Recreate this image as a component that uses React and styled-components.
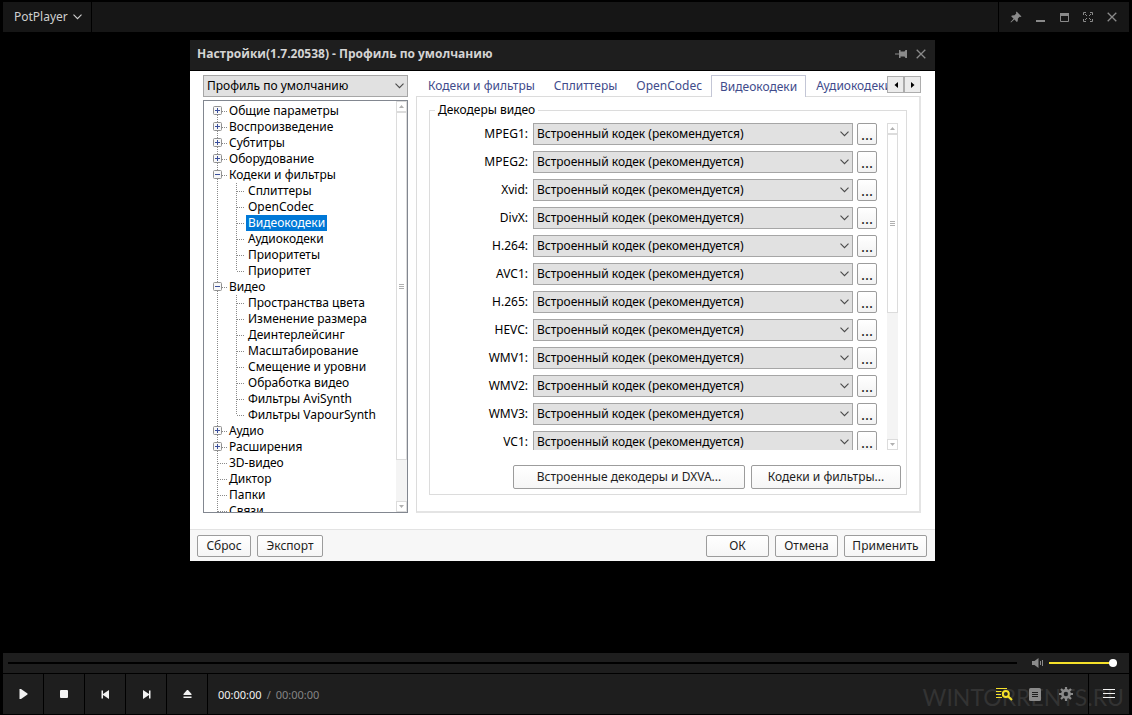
import React from "react";
import styled, { createGlobalStyle } from "styled-components";

const GlobalStyle = createGlobalStyle`
    * { box-sizing: border-box; }
    body {
        margin: 0;
        background: #000;
        font-family: "Noto Sans", "Open Sans", sans-serif;
        font-size: 12px;
        line-height: 16px;
    }
    button, select, input {
        font: inherit;
        margin: 0;
        padding: 0;
    }
    button { cursor: pointer; }
    svg { display: block; flex: none; }
`;

const Player = styled.div`
    min-height: 100vh;
    display: flex;
    flex-direction: column;
    padding: 2px 3px 1px;
`;

/* ---- player title bar ---- */
const TitleBar = styled.header`
    display: flex;
    justify-content: space-between;
    height: 30px;
    background: #161616;
`;
const AppMenu = styled.button`
    display: flex;
    align-items: center;
    gap: 5px;
    padding: 0 9px 0 11px;
    border: 0;
    border-right: 1px solid #000;
    background: none;
    color: #cfcfcf;
`;
const WindowButtons = styled.div`
    display: flex;
    align-items: center;
    padding: 0 5px;
    border-left: 1px solid #000;
`;
const IconButton = styled.button`
    display: flex;
    align-items: center;
    justify-content: center;
    width: ${props => (props.$narrow ? "20px" : "24px")};
    height: 24px;
    border: 0;
    background: none;
    color: ${props => props.color || "#8a8a8a"};
`;

/* ---- settings dialog ---- */
const Stage = styled.main`
    flex: 1;
    padding: 8px 194px 8px 187px;
`;
const Dialog = styled.section`
    display: flex;
    flex-direction: column;
    background: #fff;
    color: #000;
`;
const DialogHeader = styled.div`
    display: flex;
    align-items: center;
    height: 31px;
    padding: 0 4px 3px 7px;
    background: #1e1e1e;
    border-bottom: 1px solid #000;
    color: #d4d4d4;
`;
const DialogTitle = styled.h1`
    flex: 1;
    margin: 0;
    font-family: "Open Sans", "Noto Sans", sans-serif;
    font-size: 12px;
    font-weight: 700;
`;
const DialogBody = styled.div`
    display: grid;
    grid-template-columns: 205px minmax(0, 1fr);
    gap: 8px;
    padding: 4px 14px 16px 13px;
`;
const SideColumn = styled.div`
    display: flex;
    flex-direction: column;
    gap: 3px;
`;
const SelectWrap = styled.div`
    position: relative;
    flex: ${props => (props.$grow ? "1" : "none")};
    color: #4a4a4a;
    svg {
        position: absolute;
        right: 4px;
        top: 8px;
        pointer-events: none;
    }
`;
const Select = styled.select`
    display: block;
    width: 100%;
    height: 22px;
    padding: 0 20px 0 3px;
    border: 1px solid #a6a6a6;
    border-radius: 0;
    background: #e1e1e1;
    color: #000;
    appearance: none;
`;
const TreeBox = styled.div`
    display: flex;
    flex: 1 0 0;
    height: 0;
    border: 1px solid #828790;
    overflow: hidden;
    background: #fff;
`;
const TreeList = styled.ul`
    flex: 1;
    margin: 0;
    padding: 2px 0 0 9px;
    list-style: none;
    overflow: hidden;
`;
const TreeRow = styled.li`
    display: flex;
    align-items: center;
    height: 16px;
`;
const TreeLabel = styled.button`
    height: 16px;
    padding: 0 2px;
    border: 0;
    line-height: 16px;
    white-space: nowrap;
    background: ${props => (props.$active ? "#0078d7" : "none")};
    color: ${props => (props.$active ? "#fff" : "#000")};
`;

const ScrollBar = styled.div`
    display: flex;
    flex-direction: column;
    width: 11px;
    background: #f4f4f4;
`;
const ScrollArrow = styled.button`
    display: flex;
    align-items: center;
    justify-content: center;
    height: 11px;
    border: 1px solid #dcdcdc;
    background: #fff;
`;
const ScrollThumb = styled.div`
    display: flex;
    align-items: center;
    justify-content: center;
    flex: ${props => props.$size};
    border: 1px solid #dcdcdc;
    background: #fff;
`;
const ScrollRest = styled.div`
    flex: ${props => props.$size};
`;

/* ---- tabs and decoder list ---- */
const Page = styled.div`
    display: flex;
    flex-direction: column;
`;
const TabStrip = styled.div`
    display: flex;
    height: 21px;
`;
const Tabs = styled.div`
    display: flex;
    flex: 1;
    height: 22px;
    padding-left: 2px;
    overflow: hidden;
    z-index: 1;
`;
const Tab = styled.button`
    flex: none;
    height: ${props => (props.$active ? "22px" : "20px")};
    padding: 0 ${props => (props.$active ? "8px" : "8px 0 9px")};
    border: 1px solid ${props => (props.$active ? "#c3c6d6" : "transparent")};
    border-bottom: 0;
    background: ${props => (props.$active ? "#fff" : "none")};
    color: #414b8b;
    white-space: nowrap;
`;
const TabArrow = styled.button`
    display: flex;
    align-items: center;
    justify-content: center;
    width: 17px;
    height: 17px;
    margin-top: 1px;
    border: 1px solid #adadad;
    background: #ececec;
`;
const TabPanel = styled.div`
    padding: 5px 12px 16px;
    border: 1px solid #dcdcdc;
    border-right: 2px solid #e4e4e4;
    border-bottom: 2px solid #e4e4e4;
`;
const Group = styled.fieldset`
    min-width: 0;
    margin: 0;
    padding: 5px;
    border: 1px solid #dcdcdc;
`;
const Legend = styled.legend`
    padding: 0 3px;
`;
const ListArea = styled.div`
    display: flex;
    height: 327px;
    padding-right: 3px;
    overflow: hidden;
`;
const CodecList = styled.div`
    display: flex;
    flex: 1;
    flex-direction: column;
    gap: 6px;
    padding-right: 10px;
`;
const CodecRow = styled.div`
    display: flex;
    gap: 4px;
`;
const CodecLabel = styled.label`
    width: 94px;
    padding-right: 1px;
    line-height: 22px;
    text-align: right;
`;
const MoreButton = styled.button`
    width: 20px;
    height: 22px;
    border: 1px solid #9c9c9c;
    border-radius: 2px;
    background: linear-gradient(#fff, #f2f2f2);
    color: #1e1e1e;
    font-size: 15px;
    line-height: 20px;
`;
const GroupButtons = styled.div`
    display: flex;
    justify-content: flex-end;
    gap: 6px;
    margin-top: 15px;
`;
const PushButton = styled.button`
    width: ${props => props.$width}px;
    height: ${props => (props.$tall ? "24px" : "22px")};
    border: 1px solid #9c9c9c;
    border-radius: 2px;
    background: linear-gradient(#fff, #f6f6f6);
    color: #1e1e1e;
    white-space: nowrap;
`;
const DialogFooter = styled.div`
    display: flex;
    gap: 6px;
    padding: 5px 8px 4px 7px;
    border-top: 1px solid #e3e3e3;
    background: #f7f7f7;
`;
const Spacer = styled.div`
    flex: 1;
`;

/* ---- playback bar ---- */
const Playback = styled.footer`
    background: #1e1e1e;
`;
const SeekRow = styled.div`
    display: flex;
    align-items: center;
    height: 21px;
    padding: 0 12px 0 5px;
    border-bottom: 1px solid #000;
    color: #8a8a8a;
`;
const SeekSlider = styled.input`
    flex: 1;
    height: 2px;
    margin-right: 15px;
    appearance: none;
    background: #000;
    &::-webkit-slider-thumb {
        appearance: none;
        width: 0;
        height: 0;
    }
`;
const VolumeSlider = styled.input`
    width: 68px;
    height: 2px;
    margin-left: 5px;
    appearance: none;
    background: #f5e12a;
    &::-webkit-slider-thumb {
        appearance: none;
        width: 8px;
        height: 8px;
        border-radius: 50%;
        background: #fff;
    }
`;
const ControlRow = styled.div`
    position: relative;
    display: flex;
    align-items: stretch;
    height: 40px;
`;
const ControlButton = styled.button`
    display: flex;
    align-items: center;
    justify-content: center;
    width: 41px;
    border: 0;
    border-right: 1px solid #000;
    background: none;
    color: #f2f2f2;
    z-index: 1;
`;
const MenuButton = styled(ControlButton)`
    border-right: 0;
    border-left: 1px solid #000;
`;
const Clock = styled.div`
    display: flex;
    flex: 1;
    align-items: center;
    gap: 5px;
    padding: 2px 0 0 10px;
    font-size: 11px;
    color: #858585;
    time:first-child { color: #f2f2f2; }
`;
const Tools = styled.div`
    display: flex;
    align-items: center;
    gap: 7px;
    padding-right: 10px;
    z-index: 1;
`;
const Watermark = styled.div`
    position: absolute;
    right: 5px;
    bottom: 0;
    font-family: Lato, "Noto Sans", sans-serif;
    font-size: 23px;
    line-height: 34px;
    color: #333;
    pointer-events: none;
`;

const tree = [
    { label: "Общие параметры", box: "plus" },
    { label: "Воспроизведение", box: "plus" },
    { label: "Субтитры", box: "plus" },
    { label: "Оборудование", box: "plus" },
    { label: "Кодеки и фильтры", box: "minus" },
    { label: "Сплиттеры", child: true },
    { label: "OpenCodec", child: true },
    { label: "Видеокодеки", child: true },
    { label: "Аудиокодеки", child: true },
    { label: "Приоритеты", child: true },
    { label: "Приоритет", child: true, last: true },
    { label: "Видео", box: "minus" },
    { label: "Пространства цвета", child: true },
    { label: "Изменение размера", child: true },
    { label: "Деинтерлейсинг", child: true },
    { label: "Масштабирование", child: true },
    { label: "Смещение и уровни", child: true },
    { label: "Обработка видео", child: true },
    { label: "Фильтры AviSynth", child: true },
    { label: "Фильтры VapourSynth", child: true, last: true },
    { label: "Аудио", box: "plus" },
    { label: "Расширения", box: "plus" },
    { label: "3D-видео" },
    { label: "Диктор" },
    { label: "Папки" },
    { label: "Связи" },
];
const tabs = ["Кодеки и фильтры", "Сплиттеры", "OpenCodec", "Видеокодеки", "Аудиокодеки"];
const codecs = ["MPEG1", "MPEG2", "Xvid", "DivX", "H.264", "AVC1", "H.265", "HEVC", "WMV1", "WMV2", "WMV3", "VC1"];

const Chevron = () => (
    <svg width="9" height="6" viewBox="0 0 9 6" fill="none" stroke="currentColor" strokeWidth="1.1">
        <path d="M0.5 0.7 4.5 4.7 8.5 0.7" />
    </svg>
);

// dotted connector lines and the expand box in front of a tree label
function Branch({ item, first }) {
    const width = item.child ? 33 : 14;
    return (
        <svg width={width} height="16" fill="none" stroke="#8a8a8a" strokeDasharray="1 1">
            <path d={first ? "M4.5 8V16" : "M4.5 0V16"} />
            {item.child && <path d={item.last ? "M23.5 0V8" : "M23.5 0V16"} />}
            <path d={item.child ? "M24 8.5H32" : "M5 8.5H14"} />
            {item.box && (
                <g strokeDasharray="none">
                    <rect x="0.5" y="3.5" width="8" height="8" rx="1" fill="#f8f8f8" stroke="#919191" />
                    <path d="M2 7.5H7" stroke="#3a4f9c" />
                    {item.box === "plus" && <path d="M4.5 5V10" stroke="#3a4f9c" />}
                </g>
            )}
        </svg>
    );
}

function Scroll({ thumb, rest }) {
    return (
        <ScrollBar>
            <ScrollArrow aria-label="Вверх">
                <svg width="5" height="3"><path d="M0 3 2.5 0 5 3Z" fill="#b0b0b0" /></svg>
            </ScrollArrow>
            <ScrollThumb $size={thumb}>
                <svg width="5" height="5" stroke="#b0b0b0"><path d="M0 0.5H5M0 2.5H5M0 4.5H5" /></svg>
            </ScrollThumb>
            <ScrollRest $size={rest} />
            <ScrollArrow aria-label="Вниз">
                <svg width="5" height="3"><path d="M0 0 2.5 3 5 0Z" fill="#b0b0b0" /></svg>
            </ScrollArrow>
        </ScrollBar>
    );
}

const CloseIcon = () => (
    <svg width="10" height="10" stroke="currentColor" strokeWidth="1.3">
        <path d="M0.7 0.7 9.3 9.3M9.3 0.7 0.7 9.3" />
    </svg>
);

function App() {
    const [page, setPage] = React.useState("Видеокодеки");

    return (
        <Player>
            <GlobalStyle />
            <TitleBar>
                <AppMenu>PotPlayer <Chevron /></AppMenu>
                <WindowButtons>
                    <IconButton aria-label="Поверх всех окон">
                        <svg width="12" height="12" viewBox="0 0 12 12" fill="currentColor">
                            <path d="M6.6 0.5 11.5 5.4 10.4 6 9.6 5.8 7.9 7.6 7.7 10.2 6.8 10.9 4.4 8.5 1 11.6 0.5 11 3.6 7.7 1.2 5.3 1.9 4.4 4.5 4.2 6.3 2.5 6 1.6Z" />
                        </svg>
                    </IconButton>
                    <IconButton aria-label="Свернуть">
                        <svg width="9" height="10" fill="currentColor"><path d="M0 8H9V10H0Z" /></svg>
                    </IconButton>
                    <IconButton aria-label="Развернуть">
                        <svg width="9" height="9" fill="none" stroke="currentColor">
                            <path d="M0.5 0.5H8.5V8.5H0.5Z" /><path d="M0 1.5H9" strokeWidth="3" />
                        </svg>
                    </IconButton>
                    <IconButton aria-label="Во весь экран">
                        <svg width="10" height="10" fill="none" stroke="currentColor">
                            <path d="M0.5 3V0.5H3M7 0.5H9.5V3M9.5 7V9.5H7M3 9.5H0.5V7M2 2 4 4M8 2 6 4M8 8 6 6M2 8 4 6" />
                        </svg>
                    </IconButton>
                    <IconButton aria-label="Закрыть"><CloseIcon /></IconButton>
                </WindowButtons>
            </TitleBar>

            <Stage>
                <Dialog aria-label="Настройки">
                    <DialogHeader>
                        <DialogTitle>Настройки(1.7.20538) - Профиль по умолчанию</DialogTitle>
                        <IconButton $narrow aria-label="Закрепить">
                            <svg width="12" height="8" fill="currentColor">
                                <path d="M0 3.5H4V0H5.5V1.5H9.5L10.5 0H12V8H10.5L9.5 6.5H5.5V8H4V4.5H0Z" />
                            </svg>
                        </IconButton>
                        <IconButton $narrow aria-label="Закрыть настройки"><CloseIcon /></IconButton>
                    </DialogHeader>

                    <DialogBody>
                        <SideColumn>
                            <SelectWrap>
                                <Select aria-label="Профиль"><option>Профиль по умолчанию</option></Select>
                                <Chevron />
                            </SelectWrap>
                            <TreeBox>
                                <TreeList>
                                    {tree.map((item, i) => (
                                        <TreeRow key={item.label}>
                                            <Branch item={item} first={i === 0} />
                                            <TreeLabel $active={item.label === page} onClick={() => setPage(item.label)}>
                                                {item.label}
                                            </TreeLabel>
                                        </TreeRow>
                                    ))}
                                </TreeList>
                                <Scroll thumb={347} rest={41} />
                            </TreeBox>
                        </SideColumn>

                        <Page>
                            <TabStrip>
                                <Tabs role="tablist">
                                    {tabs.map(tab => (
                                        <Tab
                                            key={tab}
                                            role="tab"
                                            aria-selected={tab === page}
                                            $active={tab === page}
                                            onClick={() => setPage(tab)}
                                        >
                                            {tab}
                                        </Tab>
                                    ))}
                                </Tabs>
                                <TabArrow aria-label="Назад">
                                    <svg width="4" height="6"><path d="M4 0V6L0.5 3Z" /></svg>
                                </TabArrow>
                                <TabArrow aria-label="Вперёд">
                                    <svg width="4" height="6"><path d="M0 0V6L3.5 3Z" /></svg>
                                </TabArrow>
                            </TabStrip>
                            <TabPanel>
                                <Group>
                                    <Legend>Декодеры видео</Legend>
                                    <ListArea>
                                        <CodecList>
                                            {codecs.map(codec => (
                                                <CodecRow key={codec}>
                                                    <CodecLabel htmlFor={codec}>{codec}:</CodecLabel>
                                                    <SelectWrap $grow>
                                                        <Select id={codec}>
                                                            <option>Встроенный кодек (рекомендуется)</option>
                                                        </Select>
                                                        <Chevron />
                                                    </SelectWrap>
                                                    <MoreButton aria-label={"Настроить " + codec}>...</MoreButton>
                                                </CodecRow>
                                            ))}
                                        </CodecList>
                                        <Scroll thumb={178} rest={127} />
                                    </ListArea>
                                    <GroupButtons>
                                        <PushButton $width={232} $tall>Встроенные декодеры и DXVA...</PushButton>
                                        <PushButton $width={150} $tall>Кодеки и фильтры...</PushButton>
                                    </GroupButtons>
                                </Group>
                            </TabPanel>
                        </Page>
                    </DialogBody>

                    <DialogFooter>
                        <PushButton $width={54}>Сброс</PushButton>
                        <PushButton $width={66}>Экспорт</PushButton>
                        <Spacer />
                        <PushButton $width={63}>ОК</PushButton>
                        <PushButton $width={63}>Отмена</PushButton>
                        <PushButton $width={83}>Применить</PushButton>
                    </DialogFooter>
                </Dialog>
            </Stage>

            <Playback>
                <SeekRow>
                    <SeekSlider type="range" defaultValue="0" aria-label="Позиция" />
                    <svg width="12" height="10" viewBox="0 0 12 10" fill="currentColor">
                        <path d="M0 3H2.5L6.5 0V10L2.5 7H0Z" />
                        <path d="M8.5 3V7M10.5 2V8" stroke="currentColor" />
                    </svg>
                    <VolumeSlider type="range" defaultValue="100" aria-label="Громкость" />
                </SeekRow>
                <ControlRow>
                    <Watermark>WINTORRENTS.RU</Watermark>
                    <ControlButton aria-label="Воспроизвести">
                        <svg width="9" height="10" fill="currentColor"><path d="M0.5 0H2L8.5 4.5V5.5L2 10H0.5Z" /></svg>
                    </ControlButton>
                    <ControlButton aria-label="Стоп">
                        <svg width="8" height="8" fill="currentColor"><rect width="8" height="8" rx="1" /></svg>
                    </ControlButton>
                    <ControlButton aria-label="Предыдущий">
                        <svg width="9" height="9" fill="currentColor"><path d="M0.5 0.5H2V4L8 0V9L2 5V8.5H0.5Z" /></svg>
                    </ControlButton>
                    <ControlButton aria-label="Следующий">
                        <svg width="9" height="9" fill="currentColor"><path d="M8.5 0.5H7V4L1 0V9L7 5V8.5H8.5Z" /></svg>
                    </ControlButton>
                    <ControlButton aria-label="Открыть">
                        <svg width="9" height="8" fill="currentColor"><path d="M4 0H5L8.5 4V5H0.5V4ZM0.5 6.5H8.5V8H0.5Z" /></svg>
                    </ControlButton>
                    <Clock>
                        <time>00:00:00</time>
                        <span>/</span>
                        <time>00:00:00</time>
                    </Clock>
                    <Tools>
                        <IconButton color="#f5e12a" aria-label="Поиск в списке">
                            <svg width="17" height="14" viewBox="0 0 17 14" fill="none" stroke="currentColor">
                                <path d="M0 1.5H11M0 4.5H5.5M0 7.5H5M0 10.5H6" />
                                <circle cx="9.8" cy="7" r="3" strokeWidth="2" />
                                <path d="M12 9.2 16 13" strokeWidth="2.2" />
                            </svg>
                        </IconButton>
                        <IconButton aria-label="Плейлист">
                            <svg width="12" height="13" viewBox="0 0 12 13">
                                <rect width="12" height="13" rx="1.5" fill="currentColor" />
                                <path d="M3 4.5H9M3 6.5H9M3 8.5H9" stroke="#1e1e1e" />
                            </svg>
                        </IconButton>
                        <IconButton aria-label="Параметры">
                            <svg width="14" height="14" viewBox="-7 -7 14 14" fill="none" stroke="currentColor">
                                <circle r="3.6" strokeWidth="2.6" />
                                <path d="M0-7V-4M0 4V7M-7 0H-4M4 0H7M-5-5-3-3M3 3 5 5M5-5 3-3M-3 3-5 5" strokeWidth="2.2" />
                            </svg>
                        </IconButton>
                    </Tools>
                    <MenuButton aria-label="Меню">
                        <svg width="12" height="10" stroke="currentColor"><path d="M0 0.5H12M0 4.5H12M0 8.5H12" /></svg>
                    </MenuButton>
                </ControlRow>
            </Playback>
        </Player>
    );
}

export default App;
